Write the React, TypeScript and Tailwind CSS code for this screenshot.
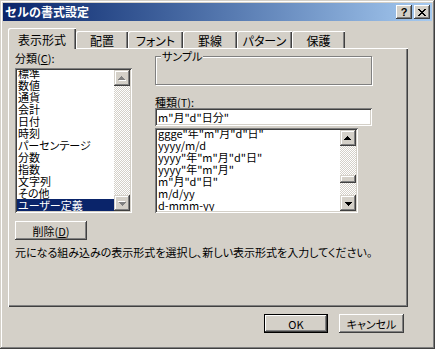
import React from "react";

// ─── Classic Win32 bevels ─────────────────────────────────────────────────────

const RAISED =
  "shadow-[inset_-1px_-1px_#404040,inset_1px_1px_#d4d0c8,inset_-2px_-2px_#808080,inset_2px_2px_#ffffff]";
const BUTTON =
  "shadow-[inset_-1px_-1px_#404040,inset_1px_1px_#ffffff,inset_-2px_-2px_#808080,inset_2px_2px_#d4d0c8]";
const SUNKEN =
  "shadow-[inset_1px_1px_#808080,inset_-1px_-1px_#ffffff,inset_2px_2px_#404040,inset_-2px_-2px_#d4d0c8]";

const CATEGORIES = [
  "標準",
  "数値",
  "通貨",
  "会計",
  "日付",
  "時刻",
  "パーセンテージ",
  "分数",
  "指数",
  "文字列",
  "その他",
  "ユーザー定義",
];

const FORMATS = [
  'ggge"年"m"月"d"日"',
  "yyyy/m/d",
  'yyyy"年"m"月"d"日"',
  'yyyy"年"m"月"',
  'm"月"d"日"',
  "m/d/yy",
  "d-mmm-yy",
];

const TABS = [
  { label: "表示形式", w: "w-[68px]" },
  { label: "配置", w: "w-[52px]" },
  { label: "フォント", w: "w-[55px]" },
  { label: "罫線", w: "w-[54px]" },
  { label: "パターン", w: "w-[55px]" },
  { label: "保護", w: "w-[53px]" },
];

function Arrow({ down, disabled }: { down?: boolean; disabled?: boolean }) {
  const d = "M3 0h1v1h1v1h1v1h1v1H0V3h1V2h1V1h1z";
  return (
    <svg
      width="8"
      height="5"
      viewBox="0 0 8 5"
      shapeRendering="crispEdges"
      className={down ? "rotate-180" : ""}
    >
      {disabled && <path d={d} fill="#ffffff" transform="translate(1 1)" />}
      <path d={d} fill={disabled ? "#808080" : "#000000"} />
    </svg>
  );
}

function ScrollBar({ disabled, thumbAt }: { disabled?: boolean; thumbAt?: number }) {
  return (
    <div className="w-[16px] h-full flex flex-col shrink-0">
      <div className={`h-[16px] bg-[#d4d0c8] flex items-center justify-center ${RAISED}`}>
        <Arrow disabled={disabled} />
      </div>
      <div className="flex-1 flex flex-col bg-[image:repeating-conic-gradient(#d4d0c8_0%_25%,#ffffff_0%_50%)] bg-[length:2px_2px]">
        {thumbAt !== undefined && (
          <>
            <div className="h-[29px]" />
            <div className={`h-[8px] bg-[#d4d0c8] ${RAISED}`} />
          </>
        )}
      </div>
      <div className={`h-[16px] bg-[#d4d0c8] flex items-center justify-center ${RAISED}`}>
        <Arrow down disabled={disabled} />
      </div>
    </div>
  );
}

export default function App() {
  return (
    <div
      className={`w-[435px] h-[349px] bg-[#d4d0c8] p-[3px] flex flex-col text-[11px] leading-[12px] text-black font-['Noto_Sans_CJK_JP','Noto_Sans',sans-serif] [font-feature-settings:'palt'] shadow-[inset_-1px_-1px_#404040,inset_1px_1px_#d4d0c8,inset_-2px_-2px_#808080,inset_2px_2px_#ffffff]`}
    >
      {/* Title bar */}
      <div className="h-[18px] flex items-center pl-[2px] pr-[2px] bg-gradient-to-r from-[#0a246a] to-[#a6caf0]">
        <span className="text-white font-bold text-[12px] [font-feature-settings:normal]">
          セルの書式設定
        </span>
        <div className="ml-auto flex gap-[2px]">
          <div className={`w-[16px] h-[14px] bg-[#d4d0c8] flex items-center justify-center font-bold text-[11px] font-['Liberation_Sans',sans-serif] ${BUTTON}`}>
            ?
          </div>
          <div className={`w-[16px] h-[14px] bg-[#d4d0c8] flex items-center justify-center ${BUTTON}`}>
            <svg width="8" height="7" viewBox="0 0 8 7" shapeRendering="crispEdges">
              <path
                d="M0 0h2v1h1v1h2V1h1V0h2v1H7v1H6v1H5v1h1v1h1v1h1v1H6V6H5V5H3v1H2v1H0V6h1V5h1V4h1V3H2V2H1V1H0z"
                fill="#000"
              />
            </svg>
          </div>
        </div>
      </div>

      {/* Tabs + panel */}
      <div className="pl-[5px] pt-[7px]">
        <div className="h-[20px] flex items-end">
          {TABS.map((t, i) =>
            i === 0 ? (
              <div
                key={t.label}
                className={`${t.w} h-[21px] -mb-px relative z-10 bg-[#d4d0c8] rounded-tl-[2px] flex items-center justify-center pt-[3px] text-[12px] shadow-[inset_1px_1px_#ffffff,inset_-1px_0_#404040,inset_-2px_0_#808080]`}
              >
                {t.label}
              </div>
            ) : (
              <div
                key={t.label}
                className={`${t.w} h-[17px] bg-[#d4d0c8] rounded-tl-[2px] flex items-center justify-center pt-[2px] text-[12px] shadow-[inset_1px_1px_#ffffff,inset_-1px_0_#404040,inset_-2px_0_#808080]`}
              >
                {t.label}
              </div>
            )
          )}
        </div>

        <div className="w-[400px] h-[259px] pt-[4px] pl-[7px] shadow-[inset_1px_1px_#ffffff,inset_-1px_-1px_#404040,inset_-2px_-2px_#808080]">
          <div className="flex">
            {/* Category list */}
            <div className="w-[117px] flex flex-col">
              <div className="h-[16px]">
                分類(<span className="underline">C</span>):
              </div>
              <div className={`h-[145px] bg-white p-[2px] ${SUNKEN}`}>
                <div className="h-full flex overflow-hidden">
                  <div className="flex-1 -mt-[3px]">
                    {CATEGORIES.map((c, i) => (
                      <div
                        key={c}
                        className={`h-[12px] pl-[1px] whitespace-nowrap ${
                          i === CATEGORIES.length - 1 ? "bg-[#0a246a] text-white" : ""
                        }`}
                      >
                        {c}
                      </div>
                    ))}
                  </div>
                  <ScrollBar disabled />
                </div>
              </div>
            </div>

            {/* Right column */}
            <div className="ml-[23px] w-[217px] flex flex-col">
              <div className="relative mt-[4px] h-[29px] border border-[#808080] shadow-[1px_1px_#ffffff,inset_1px_1px_#ffffff]">
                <span className="absolute -top-[7px] left-[5px] px-[1px] bg-[#d4d0c8]">サンプル</span>
              </div>
              <div className="h-[23px] pt-[11px]">
                種類(<span className="underline">T</span>):
              </div>
              <div className={`h-[18px] bg-white pl-[3px] flex items-center ${SUNKEN}`}>
                m"月"d"日分"
              </div>
              <div className={`mt-[2px] w-[203px] h-[85px] bg-white p-[2px] ${SUNKEN}`}>
                <div className="h-full flex overflow-hidden">
                  <div className="flex-1 -mt-[3px]">
                    {FORMATS.map((f) => (
                      <div key={f} className="h-[12px] pl-[1px] whitespace-nowrap">
                        {f}
                      </div>
                    ))}
                  </div>
                  <ScrollBar thumbAt={29} />
                </div>
              </div>
            </div>
          </div>

          <div
            className={`mt-[8px] w-[72px] h-[19px] bg-[#d4d0c8] flex items-center justify-center ${BUTTON}`}
          >
            削除(<span className="underline">D</span>)
          </div>
          <div className="mt-[6px] whitespace-nowrap">
            元になる組み込みの表示形式を選択し、新しい表示形式を入力してください。
          </div>
        </div>
      </div>

      {/* Dialog buttons */}
      <div className="mt-[7px] flex justify-end gap-[11px] pr-[28px]">
        <div className="w-[64px] h-[19px] border border-black">
          <div className={`h-full bg-[#d4d0c8] flex items-center justify-center ${BUTTON}`}>OK</div>
        </div>
        <div className={`w-[65px] h-[19px] bg-[#d4d0c8] flex items-center justify-center ${BUTTON}`}>
          キャンセル
        </div>
      </div>
    </div>
  );
}
